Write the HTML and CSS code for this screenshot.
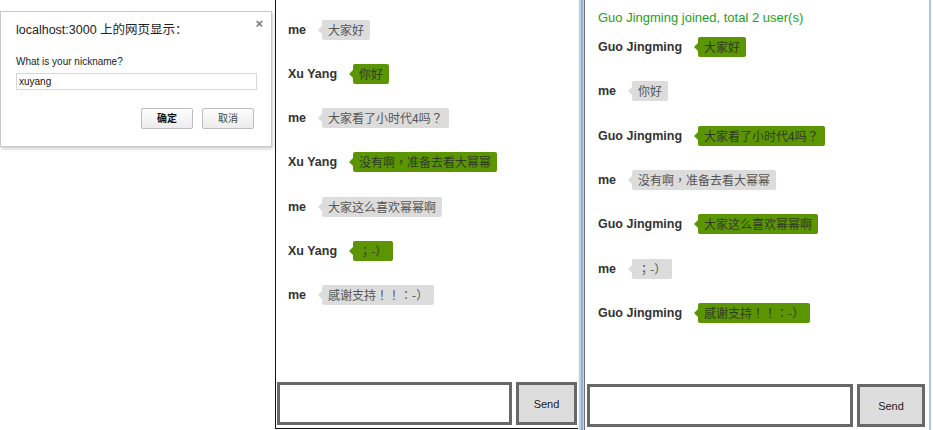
FILE: index.html
```html
<!DOCTYPE html>
<html>
<head>
<meta charset="utf-8">
<link rel="stylesheet" href="styles.css">
</head>
<body>
<div class="page">
  <div class="prompt-area">
    <div class="dialog">
      <div class="dialog-close">×</div>
      <div class="dialog-title">localhost:3000 上的网页显示：</div>
      <div class="dialog-label">What is your nickname?</div>
      <div class="dialog-input">xuyang</div>
      <div class="dialog-buttons">
        <div class="dbtn dbtn-ok">确定</div>
        <div class="dbtn">取消</div>
      </div>
    </div>
  </div>

  <div class="chat chat-left">
    <ul class="messages">
      <li class="msg"><span class="name">me</span><span class="bubble grey">大家好</span></li>
      <li class="msg"><span class="name">Xu Yang</span><span class="bubble green">你好</span></li>
      <li class="msg"><span class="name">me</span><span class="bubble grey">大家看了小时代4吗？</span></li>
      <li class="msg"><span class="name">Xu Yang</span><span class="bubble green">没有啊，准备去看大幂幂</span></li>
      <li class="msg"><span class="name">me</span><span class="bubble grey">大家这么喜欢幂幂啊</span></li>
      <li class="msg"><span class="name">Xu Yang</span><span class="bubble green">；-）</span></li>
      <li class="msg"><span class="name">me</span><span class="bubble grey">感谢支持！！：-）</span></li>
    </ul>
    <div class="composer composer-left">
      <div class="textbox"></div>
      <div class="send">Send</div>
    </div>
  </div>

  <div class="separator"></div>

  <div class="chat chat-right">
    <ul class="messages">
      <li class="notice">Guo Jingming joined, total 2 user(s)</li>
      <li class="msg"><span class="name">Guo Jingming</span><span class="bubble green">大家好</span></li>
      <li class="msg"><span class="name">me</span><span class="bubble grey">你好</span></li>
      <li class="msg"><span class="name">Guo Jingming</span><span class="bubble green">大家看了小时代4吗？</span></li>
      <li class="msg"><span class="name">me</span><span class="bubble grey">没有啊，准备去看大幂幂</span></li>
      <li class="msg"><span class="name">Guo Jingming</span><span class="bubble green">大家这么喜欢幂幂啊</span></li>
      <li class="msg"><span class="name">me</span><span class="bubble grey">；-）</span></li>
      <li class="msg"><span class="name">Guo Jingming</span><span class="bubble green">感谢支持！！：-）</span></li>
    </ul>
    <div class="composer composer-right">
      <div class="textbox"></div>
      <div class="send">Send</div>
    </div>
  </div>

  <div class="edge"></div>
</div>
</body>
</html>
```

FILE: styles.css
```css
* { box-sizing: border-box; }
html, body {
  margin: 0;
  padding: 0;
  background: #fff;
  width: 933px;
  height: 430px;
  overflow: hidden;
  font-family: "Liberation Sans", "Noto Sans CJK SC", sans-serif;
}
.page {
  display: flex;
  width: 933px;
  height: 430px;
}

/* prompt dialog */
.prompt-area {
  width: 275px;
  flex: none;
}
.dialog {
  position: relative;
  margin-top: 11px;
  width: 272px;
  height: 136px;
  border: 1px solid #c9c9c9;
  background: #fff;
  box-shadow: 1px 2px 3px rgba(0,0,0,0.18);
  padding: 9px 16px 0 15px;
}
.dialog-close {
  position: absolute;
  right: 8px;
  top: 4px;
  font-size: 13px;
  font-weight: bold;
  color: #777;
}
.dialog-title {
  height: 18px;
  line-height: 18px;
  font-size: 12.5px;
  color: #222;
}
.dialog-label {
  margin-top: 16px;
  height: 14px;
  line-height: 14px;
  font-size: 10px;
  color: #222;
}
.dialog-input {
  margin-top: 4px;
  height: 17px;
  width: 241px;
  border: 1px solid #d6d6d6;
  font-size: 10px;
  line-height: 15px;
  padding-left: 2px;
  color: #111;
}
.dialog-buttons {
  margin-top: 18px;
  display: flex;
  justify-content: flex-end;
  gap: 9px;
  padding-right: 1px;
}
.dbtn {
  width: 52px;
  height: 21px;
  border: 1px solid #bdbdbd;
  border-radius: 2px;
  background: linear-gradient(#fdfdfd, #ececec);
  font-size: 10px;
  line-height: 19px;
  text-align: center;
  color: #444;
}
.dbtn-ok {
  font-weight: bold;
  color: #111;
}

/* chat panels */
.chat {
  display: flex;
  flex-direction: column;
  flex: none;
}
.chat-left {
  width: 303px;
  height: 429px;
  border-left: 1px solid #111;
  border-bottom: 1px solid #111;
}
.chat-right {
  width: 344px;
  height: 430px;
}
.messages {
  list-style: none;
  margin: 0;
  flex: 1;
}
.chat-left .messages { padding: 20px 0 0 12px; }
.chat-right .messages { padding: 8px 0 0 13px; }

.notice {
  height: 20px;
  line-height: 20px;
  font-size: 13px;
  color: #23a023;
  margin-bottom: 9px;
}
.msg {
  display: flex;
  align-items: center;
  height: 20px;
}
.chat-left .msg { margin-bottom: 24.17px; }
.chat-right .msg { margin-bottom: 24.33px; }
.name {
  font-weight: bold;
  font-size: 12.5px;
  color: #333;
  margin-right: 16px;
}
.bubble {
  position: relative;
  height: 20px;
  line-height: 20px;
  padding: 0 6px;
  font-size: 12px;
  border-radius: 2px;
  font-family: "Noto Sans CJK TC", "Liberation Sans", sans-serif;
}
.bubble::before {
  content: "";
  position: absolute;
  left: -4px;
  top: 6px;
  border-top: 4px solid transparent;
  border-bottom: 4px solid transparent;
  border-right: 4px solid;
}
.grey {
  background: #dcdcdc;
  color: #555;
}
.grey::before { border-right-color: #dcdcdc; }
.green {
  background: #5b9602;
  color: #2f3a22;
}
.green::before { border-right-color: #5b9602; }

.composer {
  display: flex;
  gap: 4px;
  height: 43px;
  flex: none;
}
.composer-left {
  margin: 0 0 3px 1px;
}
.composer-right {
  margin: 0 0 3px 2px;
}
.textbox {
  border: 3px solid #686868;
  background: #fff;
}
.send {
  border: 3px solid #686868;
  background: #dddddd;
  font-size: 11px;
  color: #222;
  display: flex;
  align-items: center;
  justify-content: center;
}
.composer-left .textbox { width: 235px; }
.composer-left .send { width: 61px; }
.composer-right .textbox { width: 266px; }
.composer-right .send { width: 68px; }

.separator {
  width: 7px;
  flex: none;
  height: 430px;
  background: linear-gradient(to right, #f4f7fa 0, #f4f7fa 1px, #b6d2ee 1px, #b6d2ee 3px, #98afc6 3px, #98afc6 5px, #c9d6e2 5px, #c9d6e2 6px, #6c7178 6px);
}
.edge {
  width: 4px;
  flex: none;
  height: 430px;
  background: linear-gradient(to right, #a9c6e3 0, #a9c6e3 2px, #fff 2px);
}
```
